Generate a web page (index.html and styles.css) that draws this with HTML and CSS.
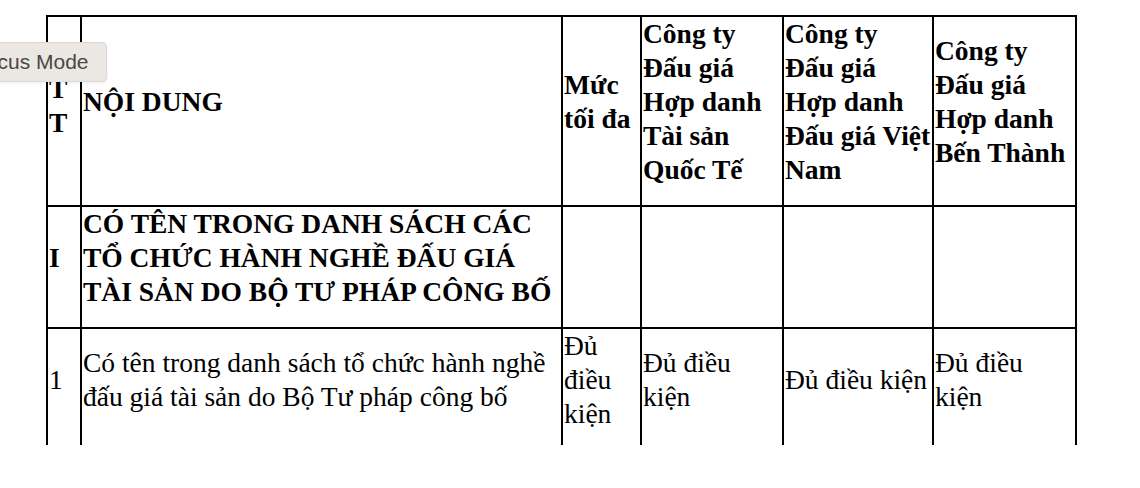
FILE: index.html
```html
<!DOCTYPE html>
<html lang="vi">
<head>
<meta charset="utf-8">
<title>Bảng</title>
<link rel="stylesheet" href="styles.css">
</head>
<body>
<div class="page">
  <div class="clip">
    <table class="grid">
      <colgroup>
        <col class="c-stt">
        <col class="c-content">
        <col class="c-max">
        <col class="c-a">
        <col class="c-b">
        <col class="c-c">
      </colgroup>
      <tr class="head">
        <td class="stt"><p class="stt-p">STT</p></td>
        <td><p>NỘI DUNG</p></td>
        <td><p>Mức tối đa</p></td>
        <td><p>Công ty Đấu giá Hợp danh Tài sản Quốc Tế</p></td>
        <td><p>Công ty Đấu giá Hợp danh Đấu giá Việt Nam</p></td>
        <td><p>Công ty Đấu giá Hợp danh Bến Thành</p></td>
      </tr>
      <tr class="section">
        <td><p>I</p></td>
        <td><p>CÓ TÊN TRONG DANH SÁCH CÁC TỔ CHỨC HÀNH NGHỀ ĐẤU GIÁ TÀI SẢN DO BỘ TƯ PHÁP CÔNG BỐ</p></td>
        <td></td>
        <td></td>
        <td></td>
        <td></td>
      </tr>
      <tr class="item">
        <td><p>1</p></td>
        <td><p>Có tên trong danh sách tổ chức hành nghề đấu giá tài sản do Bộ Tư pháp công bố</p></td>
        <td><p>Đủ điều kiện</p></td>
        <td><p>Đủ điều kiện</p></td>
        <td><p>Đủ điều kiện</p></td>
        <td><p>Đủ điều kiện</p></td>
      </tr>
    </table>
  </div>
  <div class="tooltip">Focus Mode</div>
</div>
</body>
</html>
```

FILE: styles.css
```css
html, body {
  margin: 0;
  padding: 0;
  background: #ffffff;
}

.page {
  position: relative;
  width: 1140px;
  height: 488px;
  overflow: hidden;
}

.clip {
  height: 445px;
  overflow: hidden;
  padding: 15px 0 0 46px;
  box-sizing: border-box;
}

.grid {
  border-collapse: collapse;
  table-layout: fixed;
  width: 1031px;
  font-family: "Liberation Serif", "Times New Roman", serif;
  font-size: 27.5px;
  line-height: 34px;
  color: #000;
}

.c-stt { width: 34px; }
.c-content { width: 481px; }
.c-max { width: 79px; }
.c-a { width: 142px; }
.c-b { width: 150px; }
.c-c { width: 143px; }

.grid td {
  border: 2px solid #000;
  padding: 0 1px;
  vertical-align: middle;
  text-align: left;
}

.grid p {
  margin: 0 0 18px 0;
}

.head td,
.section td {
  font-weight: bold;
}

.stt {
  word-break: break-all;
}

.stt-p {
  padding-bottom: 26px;
}

.item td {
  font-weight: normal;
}

.tooltip {
  position: absolute;
  left: -44px;
  top: 42px;
  height: 40px;
  box-sizing: border-box;
  padding: 0 17px 0 16px;
  display: flex;
  align-items: center;
  background: #ebe7e3;
  border: 1px solid #ddd8d3;
  border-radius: 5px;
  box-shadow: 0 1px 3px rgba(0, 0, 0, 0.08);
  font-family: "Liberation Sans", Arial, sans-serif;
  font-size: 21px;
  color: #4a4744;
  white-space: nowrap;
}
```
